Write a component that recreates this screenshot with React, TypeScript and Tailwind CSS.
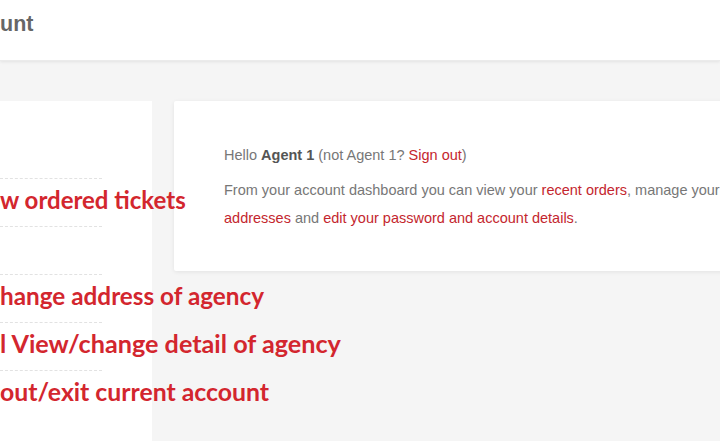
import React from "react";

const rows: { t: string; size: string }[] = [
  { t: "w ordered tickets", size: "text-[24px]" },
  { t: "", size: "" },
  { t: "hange address of agency", size: "text-[24.3px]" },
  { t: "l View/change detail of agency", size: "text-[25.2px]" },
  { t: "out/exit current account", size: "text-[24.8px]" },
];

export default function App() {
  return (
    <div className="w-[720px] h-[441px] overflow-hidden bg-[#f5f5f5]" style={{ fontFamily: "'Liberation Sans', Arial, sans-serif" }}>
      <header className="h-[61px] bg-white shadow-[0_1px_3px_rgba(0,0,0,0.08)] border-b border-[#ebebeb] flex items-center">
        <h1 className="text-[21.5px] font-bold text-[#666666] -mt-[12px]">unt</h1>
      </header>
      <div className="flex gap-[22px] mt-[40px]">
        <div className="relative z-10 w-[152px] h-[400px] bg-white shrink-0">
          <div className="h-[77px]" />
          {rows.map((r, i) => (
            <div key={i} className="relative h-[48px] flex items-center">
              <div className="absolute top-0 left-0 w-[102px] border-t border-dashed border-[#e2e2e2]" />
              {r.t ? (
                <span
                  className={`whitespace-nowrap ${r.size} font-bold text-[#d3262e] leading-none -mt-[4px]`}
                  style={{ fontFamily: "Lato, 'Liberation Sans', sans-serif" }}
                >
                  {r.t}
                </span>
              ) : null}
            </div>
          ))}
        </div>
        <div className="flex-1 min-w-[560px] h-[170px] bg-white rounded-[2px] shadow-[0_1px_4px_rgba(0,0,0,0.08)] pl-[50px] pt-[43px] text-[14.5px] text-[#777777]">
          <p className="leading-[22px] whitespace-nowrap">
            Hello <strong className="text-[#555555]">Agent 1</strong> (not Agent 1?{" "}
            <a className="text-[#c4262e]">Sign out</a>)
          </p>
          <p className="leading-[28px] mt-[10px] whitespace-nowrap">
            From your account dashboard you can view your <a className="text-[#c4262e]">recent orders</a>, manage your
            <br />
            <a className="text-[#c4262e]">addresses</a> and{" "}
            <a className="text-[#c4262e]">edit your password and account details</a>.
          </p>
        </div>
      </div>
    </div>
  );
}
